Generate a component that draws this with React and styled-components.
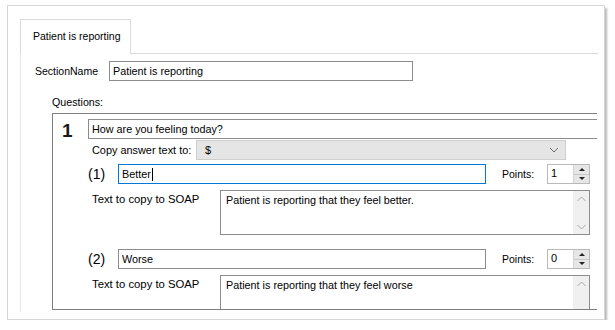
import React from "react";
import styled, { createGlobalStyle } from "styled-components";

const GlobalStyle = createGlobalStyle`
  html, body {
    margin: 0;
    padding: 0;
    background: #ffffff;
  }
  body {
    font-family: "Liberation Sans", Arial, sans-serif;
    font-size: 10.5px;
    color: #000;
  }
`;

const Frame = styled.div`
  margin: 5px 0 0 7px;
  width: 598px;
  height: 315px;
  box-sizing: border-box;
  border: 1px solid #d6d6d6;
  box-shadow: 2px 3px 2px rgba(0, 0, 0, 0.28);
  padding: 13px 6px 0 12px;
  background: #fff;
  display: flex;
  flex-direction: column;
`;

const TabStrip = styled.div`
  display: flex;
  height: 35px;
  box-sizing: border-box;
  border-bottom: 1px solid #d9d9d9;
`;

const Tab = styled.div`
  width: 111px;
  height: 35px;
  box-sizing: border-box;
  border: 1px solid #d9d9d9;
  border-bottom: none;
  background: #fff;
  display: flex;
  align-items: center;
  padding: 0 0 2px 12px;
`;

const TabPage = styled.div`
  height: 258px;
  border-left: 1px solid #e6e6e6;
  padding-left: 14px;
  padding-top: 7px;
  box-sizing: border-box;
`;

const FieldRow = styled.div`
  display: flex;
  align-items: center;
`;

const Label = styled.span`
  width: ${(p) => p.w}px;
  flex: none;
  font-size: ${(p) => p.size || 10.5}px;
  white-space: nowrap;
`;

const TextBox = styled.div`
  width: ${(p) => p.w}px;
  height: ${(p) => p.h || 20}px;
  flex: none;
  box-sizing: border-box;
  border: 1px solid ${(p) => (p.focused ? "#0078d7" : "#8c8c8c")};
  background: #fff;
  display: flex;
  align-items: center;
  padding-left: 3px;
  font-size: 10.8px;
  white-space: nowrap;
  overflow: hidden;
`;

const Caret = styled.span`
  display: inline-block;
  width: 1px;
  height: 13px;
  background: #000;
  margin-left: 1px;
`;

const QuestionsLabel = styled.div`
  margin: 15px 0 0 17px;
  font-size: 10.7px;
`;

const GroupBox = styled.div`
  margin: 5px 0 0 17px;
  width: 545px;
  height: 197px;
  box-sizing: border-box;
  border: 1px solid #7f7f7f;
  border-right: none;
  overflow: hidden;
  padding: 5px 0 0 9px;
`;

const QuestionRow = styled.div`
  display: flex;
  align-items: center;
  height: 19px;
`;

const BigNumber = styled.span`
  width: 26px;
  flex: none;
  font-size: 19px;
  font-weight: bold;
  color: #1a1a1a;
  line-height: 19px;
  margin-top: 3px;
`;

const SubRow = styled.div`
  display: flex;
  align-items: ${(p) => (p.top ? "flex-start" : "center")};
  margin-top: ${(p) => p.gap}px;
  padding-left: ${(p) => 26 + (p.indent || 0)}px;
`;

const AnswerNum = styled.span`
  width: 30px;
  flex: none;
  font-size: 14px;
`;

const Combo = styled.div`
  width: 370px;
  height: 20px;
  box-sizing: border-box;
  border: 1px solid #cfcfcf;
  background: #e5e5e5;
  display: flex;
  align-items: center;
  justify-content: space-between;
  padding: 0 6px 0 8px;
  font-size: 11px;
`;

const PointsLabel = styled.span`
  width: 45px;
  margin-left: 16px;
  flex: none;
`;

const Spin = styled.div`
  width: 43px;
  height: 20px;
  box-sizing: border-box;
  border: 1px solid #b9b9b9;
  display: flex;
  background: #fff;
`;

const SpinValue = styled.span`
  flex: 1;
  padding: 2px 0 0 3px;
  font-size: 11px;
`;

const SpinButtons = styled.div`
  width: 15px;
  display: flex;
  flex-direction: column;
  background: #e6e6e6;
  border-left: 1px solid #d4d4d4;
`;

const SpinHalf = styled.div`
  flex: 1;
  display: flex;
  align-items: center;
  justify-content: center;
  & + & {
    border-top: 1px solid #c8c8c8;
  }
`;

const Arrow = styled.span`
  width: 0;
  height: 0;
  border-left: 3px solid transparent;
  border-right: 3px solid transparent;
  ${(p) =>
    p.up ? "border-bottom: 3px solid #222;" : "border-top: 3px solid #222;"}
`;

const Memo = styled.div`
  width: 370px;
  height: ${(p) => p.h}px;
  flex: none;
  box-sizing: border-box;
  border: 1px solid #8c8c8c;
  border-bottom-color: ${(p) => (p.open ? "transparent" : "#8c8c8c")};
  display: flex;
  background: #fff;
`;

const MemoText = styled.div`
  flex: 1;
  padding: 3px 0 0 5px;
  font-size: 10.8px;
`;

const ScrollBar = styled.div`
  width: 16px;
  background: #f0f0f0;
  display: flex;
  flex-direction: column;
  justify-content: space-between;
  align-items: center;
  padding: 5px 0 4px;
`;

const Chevron = ({ up, color = "#a6a6a6", w = 9 }) => (
  <svg width={w} height="6" viewBox="0 0 9 6">
    <path
      d={up ? "M0.5 5 L4.5 1 L8.5 5" : "M0.5 1 L4.5 5 L8.5 1"}
      fill="none"
      stroke={color}
      strokeWidth="1"
    />
  </svg>
);

const Answer = ({ num, text, points, soap, focused, gap, memoH, open }) => (
  <>
    <SubRow gap={gap}>
      <AnswerNum>({num})</AnswerNum>
      <TextBox w={368} focused={focused}>
        {text}
        {focused && <Caret />}
      </TextBox>
      <PointsLabel>Points:</PointsLabel>
      <Spin>
        <SpinValue>{points}</SpinValue>
        <SpinButtons>
          <SpinHalf>
            <Arrow up />
          </SpinHalf>
          <SpinHalf>
            <Arrow />
          </SpinHalf>
        </SpinButtons>
      </Spin>
    </SubRow>
    <SubRow gap={6} indent={4} top>
      <Label w={128} size={11.3} style={{ paddingTop: 3 }}>
        Text to copy to SOAP
      </Label>
      <Memo h={memoH} open={open}>
        <MemoText>{soap}</MemoText>
        <ScrollBar>
          <Chevron up />
          <Chevron />
        </ScrollBar>
      </Memo>
    </SubRow>
  </>
);

export default function App() {
  return (
    <>
      <GlobalStyle />
      <Frame>
        <TabStrip>
          <Tab>Patient is reporting</Tab>
        </TabStrip>
        <TabPage>
          <FieldRow>
            <Label w={74}>SectionName</Label>
            <TextBox w={304} h={20}>
              Patient is reporting
            </TextBox>
          </FieldRow>
          <QuestionsLabel>Questions:</QuestionsLabel>
          <GroupBox>
            <QuestionRow>
              <BigNumber>1</BigNumber>
              <TextBox w={530} h={20}>
                How are you feeling today?
              </TextBox>
            </QuestionRow>
            <SubRow gap={2} indent={4}>
              <Label w={104} size={10.9}>
                Copy answer text to:
              </Label>
              <Combo>
                <span>$</span>
                <Chevron color="#6d6d6d" w={10} />
              </Combo>
            </SubRow>
            <Answer
              num={1}
              text="Better"
              points="1"
              soap="Patient is reporting that they feel better."
              focused
              gap={4}
              memoH={45}
            />
            <Answer
              num={2}
              text="Worse"
              points="0"
              soap="Patient is reporting that they feel worse"
              gap={14}
              memoH={45}
              open
            />
          </GroupBox>
        </TabPage>
      </Frame>
    </>
  );
}
